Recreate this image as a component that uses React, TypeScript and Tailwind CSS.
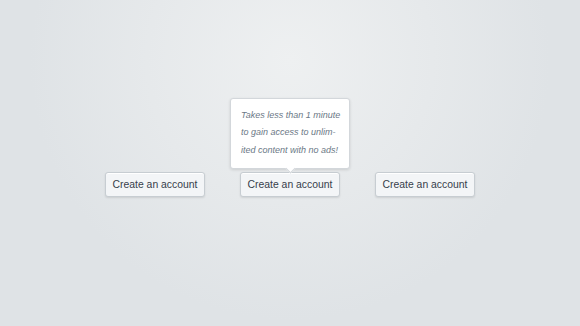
function AccountButton({ tip }: { tip?: boolean }) {
  return (
    <div className="relative">
      {tip && (
        <div className="absolute bottom-[28px] left-1/2 -translate-x-1/2 w-[120px] rounded-[3px] border border-[#d3d7db] bg-white pl-[10px] pr-[6px] pt-[8px] pb-[9px] shadow-[0_1px_3px_rgba(0,0,0,0.12)]">
          <p className="text-[9px] leading-[17.3px] italic text-[#6b7886]">
            Takes less than 1 minute to gain access to unlim-ited content with no ads!
          </p>
          <div className="absolute -bottom-[4px] left-1/2 -ml-[3.5px] h-[7px] w-[7px] rotate-45 border-r border-b border-[#d3d7db] bg-white" />
        </div>
      )}
      <button className="block h-[25px] w-[100px] rounded-[3px] border border-[#c7cdd2] bg-[#f3f5f7] text-[10.4px] leading-[23px] text-[#37404b] shadow-[0_1px_2px_rgba(0,0,0,0.1),inset_0_1px_0_#fff]">
        Create an account
      </button>
    </div>
  )
}

export default function App() {
  return (
    <div className="h-[326px] w-[580px] overflow-hidden bg-[radial-gradient(ellipse_260px_260px_at_290px_60px,#eef0f1_0%,#e6e9eb_55%,#dfe3e6_100%)] pt-[172px] font-['Liberation_Sans',Arial,sans-serif]">
      <div className="flex justify-center gap-[35px]">
        <AccountButton />
        <AccountButton tip />
        <AccountButton />
      </div>
    </div>
  )
}
